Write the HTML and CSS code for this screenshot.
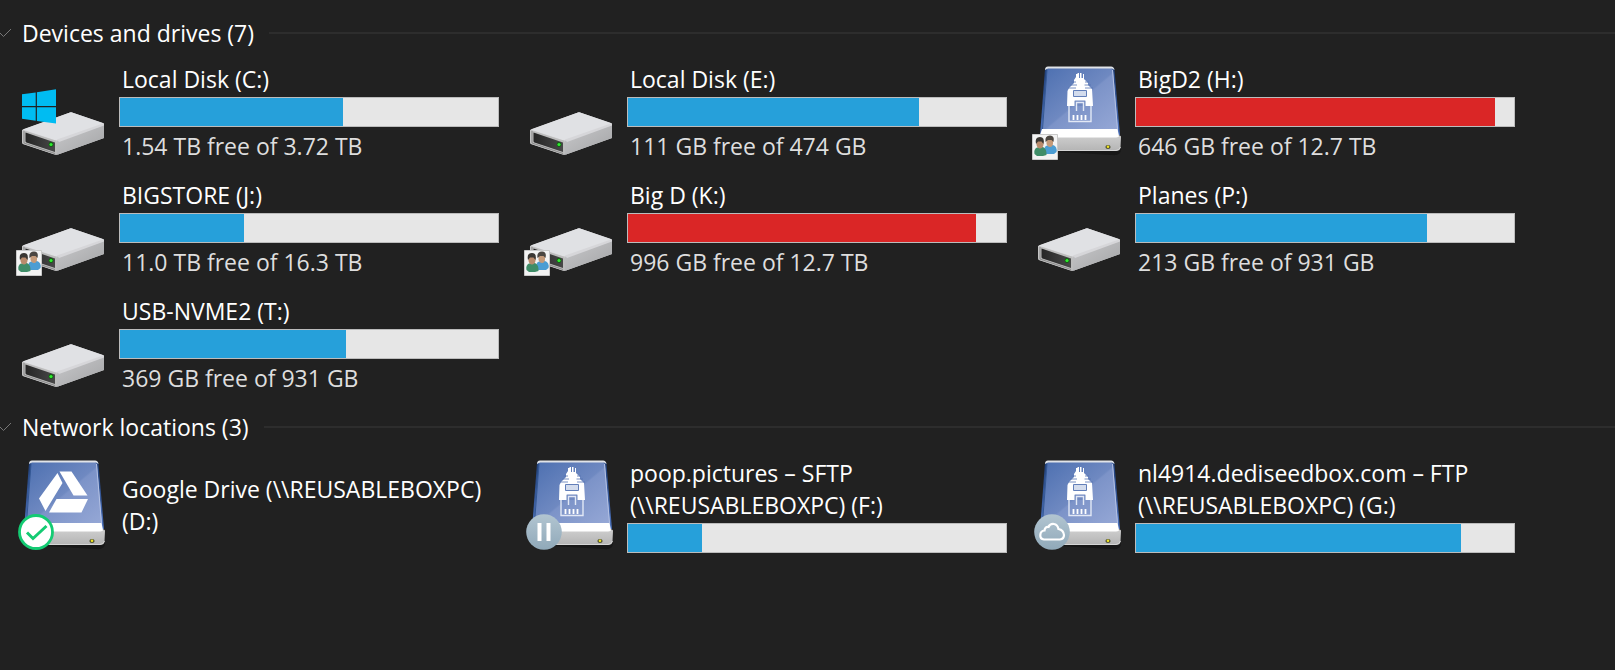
FILE: index.html
```html
<!DOCTYPE html>
<html lang="en">
<head>
<meta charset="utf-8">
<title>This PC</title>
<link rel="stylesheet" href="styles.css">
</head>
<body>
<svg class="defs" aria-hidden="true">
  <defs>
    <linearGradient id="side" x1="0" y1="0" x2="1" y2="1"><stop offset="0" stop-color="#c9c9cb"/><stop offset="1" stop-color="#a3a4a6"/></linearGradient>
    <linearGradient id="front" x1="0" y1="0" x2="1" y2="0"><stop offset="0" stop-color="#262626"/><stop offset="1" stop-color="#484848"/></linearGradient>
    <linearGradient id="blue" x1="0" y1="0" x2="1" y2="1"><stop offset="0" stop-color="#4c6fb0"/><stop offset=".5" stop-color="#6f89c1"/><stop offset=".52" stop-color="#7c93c8"/><stop offset="1" stop-color="#96a8d6"/></linearGradient>
    <linearGradient id="edge" x1="0" y1="0" x2="0" y2="1"><stop offset="0" stop-color="#1f3f78"/><stop offset="1" stop-color="#4d72bb"/></linearGradient>
    <linearGradient id="base" x1="0" y1="0" x2="0" y2="1"><stop offset="0" stop-color="#cfcfcf"/><stop offset="1" stop-color="#b4b4b4"/></linearGradient>
    <linearGradient id="disc" x1="0" y1="0" x2="0" y2="1"><stop offset="0" stop-color="#b2c5d1"/><stop offset="1" stop-color="#90a9b9"/></linearGradient>
    <symbol id="hdd" viewBox="0 0 96 96">
      <path d="M6 65 54 47.500Q55 47 56 47.500L87 58Q88 58.500 88 60V73L42 89.500Q40 90 38.500 89.500L7 79Q6 78.500 6 77Z" fill="#d0d0d2"/>
      <path d="M6.500 64.500 54 47.500Q55 47 56 47.500L88 58.500 80 63 43 74.500Q40 75.500 37 74.500Z" fill="#e0e1e4"/>
      <path d="M41 76 88 59.500V73L42 89.500Q40.500 89.500 40.500 88Z" fill="url(#side)"/>
      <path d="M41 74.500 84 59.500 88 58.500V60.500L43 77Z" fill="#d6d6d9"/>
      <path d="M6.500 65 39.500 75.500Q41 76 41 78V89.500L38 89.300 7 79Q6.300 78.500 6.300 77Z" fill="#bdbdbd"/>
      <path d="M9.500 67.500 39 77.500V87L10.500 77.500Q9.500 77 9.500 76Z" fill="url(#front)"/>
      <path d="M8 66V78L39 88.500" fill="none" stroke="#8b8b8b"/>
      <circle cx="35" cy="79.500" r="2.400" fill="#125d12"/><circle cx="35" cy="79.500" r="1.600" fill="#2fee2f"/>
    </symbol>
    <symbol id="winlogo" viewBox="0 0 96 96">
      <path d="M6 29.300 19.700 27.500V41H6ZM20.900 27.300 40 24.300V41H20.900ZM6 42.200H19.700V55.800L6 53.800ZM20.900 42.200H40V58.500L20.900 56Z" fill="#00bcf2"/>
    </symbol>
    <symbol id="netbox" viewBox="0 0 96 96">
      <path d="M9 86 80 90Q89 91 89 84V76Z" fill="#171717"/>
      <path d="M13 4Q13.500 2 16 2H79Q82 2 82.500 5L88 70H8Z" fill="url(#edge)"/>
      <path d="M15 5 15.500 2.500H79L81 5 86 66H10Z" fill="url(#blue)"/>
      <path d="M13 5Q13 1.500 16 1.500H79Q82 1.500 82.500 5L80 3.500H16Z" fill="#e1e4e8"/>
      <path d="M80.500 5 85.500 64" stroke="#b5c2e4"/>
      <path d="M15 5 10.500 64" stroke="#345894"/>
      <path d="M10 64H85.500L87.500 73H7Z" fill="#fff"/>
      <path d="M7 72.500H84Q87 72.500 87.500 70L89 71.500 88.500 83Q88 86 84 86H10Q7 86 7 83Z" fill="url(#base)"/>
      <path d="M8 85.500H84Q87.500 85 88.500 82" fill="none" stroke="#d6d6d6"/>
      <ellipse cx="76" cy="82" rx="2.600" ry="2" fill="#4f5130"/><circle cx="76" cy="81.800" r="1.300" fill="#f0e425"/>
    </symbol>
    <symbol id="plug" viewBox="0 0 96 96">
      <path d="M45.500 8H47V13H48V8H49.500V13H51V9H52V14L56 18V20L60 24 61 41H35L35.500 26 37 23 42 18V15L44 12V9H45.500Z" fill="#fff"/>
      <path d="M38 20H45M39.500 17H44M52.500 20H59M53 17H57M36 23H44M53 23H61" stroke="#5575b3" stroke-width=".8"/>
      <path d="M41.500 25.500H54.500V31.500H41.500Z" fill="#d3dced" stroke="#627fb9"/>
      <path d="M42.500 41V36Q42.500 35.500 43 35.500H53Q53.500 35.500 53.500 36V41Z" fill="#7089c0"/>
      <path d="M37 41V56.500H59V41M44.500 46V37.500H51.500V46" fill="none" stroke="#e2e8f5" stroke-width="1.400"/>
      <path d="M41.500 50V55M45.500 50V55M49.500 50V55M53.500 50V55" stroke="#fff" stroke-width="1.800"/>
    </symbol>
    <symbol id="gdrive" viewBox="0 0 96 96">
      <path d="M43.500 12.500H55.500L71.500 36.500H57.500ZM41.500 14 46.500 24 29.500 52 23 39.500ZM40.500 40H72L65.500 53.500H33Z" fill="#fff"/>
    </symbol>
    <symbol id="users" viewBox="0 0 26 26">
      <path d="M.5.5H25.500V25.500H.5Z" fill="#f3f3f3" stroke="#c9c9c9"/>
      <path d="M12 20Q11 13 15 11.500L21 11Q25.500 12.500 24.500 18L22 20Z" fill="#4b9dd3"/>
      <path d="M14.500 5H21V10Q20.500 13 18 13 15.500 13 14.500 10Z" fill="#c49a79"/>
      <path d="M13.500 8Q12.500 1.500 18 1.500 23 1.500 21.500 8L19.500 6H16Z" fill="#4b4641"/>
      <path d="M2.500 20Q1.500 15 5 13.500L11 13Q15 15 14.500 21L11 22H5Z" fill="#3f8d68"/>
      <path d="M4.500 7H11.500V11Q10.500 14.500 8 14.500 5.500 14.500 4.500 11Z" fill="#b98b6c"/>
      <path d="M4 10Q2.500 3 8 3 13 3 11.500 10L9.500 7.500H6Z" fill="#3a3733"/>
    </symbol>
    <symbol id="check" viewBox="0 0 36 36">
      <circle cx="18" cy="18" r="16.500" fill="#fff" stroke="#14cb73" stroke-width="2.800"/>
      <path d="M9 18.500 15 24.500 28.500 12" fill="none" stroke="#14cb73" stroke-width="3"/>
    </symbol>
    <symbol id="pause" viewBox="0 0 36 36">
      <circle cx="18" cy="18" r="17.800" fill="url(#disc)"/>
      <path d="M13.500 9V27M22.500 9V27" stroke="#fff" stroke-width="4"/>
    </symbol>
    <symbol id="cloud" viewBox="0 0 36 36">
      <circle cx="18" cy="18" r="17.800" fill="url(#disc)"/>
      <path d="M10 25.500Q6 25 6.300 21 6.500 17 10.500 16.500 11 12.500 14.500 13 16 9.500 20 10 23.500 10.500 24.500 15 29.500 16 30 21 30 25 26 25.500Z" fill="none" stroke="#fff" stroke-width="2.200"/>
    </symbol>
  </defs>
</svg>

<main class="view">
  <section class="group">
    <h2 class="group-title"><svg class="chevron" viewBox="0 0 12 10"><path d="M-1 4 3.500 8.500 11 1"/></svg><span>Devices and drives (7)</span></h2>
    <div class="items">
      <article class="item">
        <div class="icon"><svg viewBox="0 0 96 96"><use href="#hdd"/><use href="#winlogo"/></svg></div>
        <div class="info"><h3 class="name">Local Disk (C:)</h3><div class="bar"><div class="fill" style="width:59%"></div></div><p class="free">1.54 TB free of 3.72 TB</p></div>
      </article>
      <article class="item">
        <div class="icon"><svg viewBox="0 0 96 96"><use href="#hdd"/></svg></div>
        <div class="info"><h3 class="name">Local Disk (E:)</h3><div class="bar"><div class="fill" style="width:77%"></div></div><p class="free">111 GB free of 474 GB</p></div>
      </article>
      <article class="item">
        <div class="icon"><svg viewBox="0 0 96 96"><use href="#netbox"/><use href="#plug"/></svg><svg class="shared"><use href="#users"/></svg></div>
        <div class="info"><h3 class="name">BigD2 (H:)</h3><div class="bar"><div class="fill full" style="width:95%"></div></div><p class="free">646 GB free of 12.7 TB</p></div>
      </article>
      <article class="item">
        <div class="icon"><svg viewBox="0 0 96 96"><use href="#hdd"/></svg><svg class="shared"><use href="#users"/></svg></div>
        <div class="info"><h3 class="name">BIGSTORE (J:)</h3><div class="bar"><div class="fill" style="width:32.7%"></div></div><p class="free">11.0 TB free of 16.3 TB</p></div>
      </article>
      <article class="item">
        <div class="icon"><svg viewBox="0 0 96 96"><use href="#hdd"/></svg><svg class="shared"><use href="#users"/></svg></div>
        <div class="info"><h3 class="name">Big D (K:)</h3><div class="bar"><div class="fill full" style="width:92%"></div></div><p class="free">996 GB free of 12.7 TB</p></div>
      </article>
      <article class="item">
        <div class="icon"><svg viewBox="0 0 96 96"><use href="#hdd"/></svg></div>
        <div class="info"><h3 class="name">Planes (P:)</h3><div class="bar"><div class="fill" style="width:77%"></div></div><p class="free">213 GB free of 931 GB</p></div>
      </article>
      <article class="item">
        <div class="icon"><svg viewBox="0 0 96 96"><use href="#hdd"/></svg></div>
        <div class="info"><h3 class="name">USB-NVME2 (T:)</h3><div class="bar"><div class="fill" style="width:59.7%"></div></div><p class="free">369 GB free of 931 GB</p></div>
      </article>
    </div>
  </section>

  <section class="group">
    <h2 class="group-title"><svg class="chevron" viewBox="0 0 12 10"><path d="M-1 4 3.500 8.500 11 1"/></svg><span>Network locations (3)</span></h2>
    <div class="items">
      <article class="item">
        <div class="icon"><svg viewBox="0 0 96 96"><use href="#netbox"/><use href="#gdrive"/></svg><svg class="status"><use href="#check"/></svg></div>
        <div class="info"><h3 class="name">Google Drive (\\REUSABLEBOXPC) (D:)</h3></div>
      </article>
      <article class="item">
        <div class="icon"><svg viewBox="0 0 96 96"><use href="#netbox"/><use href="#plug"/></svg><svg class="status"><use href="#pause"/></svg></div>
        <div class="info"><h3 class="name">poop.pictures – SFTP (\\REUSABLEBOXPC) (F:)</h3><div class="bar"><div class="fill" style="width:19.6%"></div></div></div>
      </article>
      <article class="item">
        <div class="icon"><svg viewBox="0 0 96 96"><use href="#netbox"/><use href="#plug"/></svg><svg class="status"><use href="#cloud"/></svg></div>
        <div class="info"><h3 class="name">nl4914.dediseedbox.com – FTP (\\REUSABLEBOXPC) (G:)</h3><div class="bar"><div class="fill" style="width:86%"></div></div></div>
      </article>
    </div>
  </section>
</main>
</body>
</html>
```
FILE: styles.css
```css
* {
  box-sizing: border-box;
}

body {
  margin: 0;
  background: #212121;
  color: #fff;
  font: 23px/32px "Segoe UI", "Open Sans", "Noto Sans", sans-serif;
}

h2, h3, p {
  margin: 0;
  font-size: inherit;
  font-weight: 400;
}

.defs {
  position: absolute;
  width: 0;
  height: 0;
}

.view {
  padding-top: 17px;
}

.group {
  margin-bottom: 16px;
}

.group-title {
  display: flex;
  align-items: center;
  margin-bottom: 14px;
}

.group-title::after {
  content: "";
  flex: 1;
  height: 2px;
  margin-left: 15px;
  background: #2d2d2d;
}

.chevron {
  width: 12px;
  height: 10px;
  margin-right: 10px;
  fill: none;
  stroke: #777;
}

.items {
  display: grid;
  grid-template-columns: repeat(auto-fill, 483px);
  grid-auto-rows: minmax(100px, auto);
  gap: 16px 25px;
  padding-left: 16px;
}

.item {
  display: flex;
  align-items: flex-start;
  gap: 7px;
}

.icon {
  position: relative;
  flex: none;
  width: 96px;
  height: 96px;
  margin-top: 2px;
}

.icon svg {
  display: block;
  width: 100%;
  height: 100%;
}

.icon .shared {
  position: absolute;
  left: 0;
  bottom: 1px;
  width: 26px;
  height: 26px;
}

.icon .status {
  position: absolute;
  left: 2px;
  bottom: 5px;
  width: 36px;
  height: 36px;
}

.info {
  flex: 1;
  display: flex;
  flex-direction: column;
  justify-content: center;
  min-height: 96px;
}

.name, .free {
  padding-left: 3px;
}

.free {
  margin-top: 3px;
  color: #dedede;
}

.bar {
  height: 30px;
  margin-top: 2px;
  border: 1px solid #bcbcbc;
  background: #e6e6e6;
}

.fill {
  height: 100%;
  background: #26a0da;
}

.full {
  background: #da2626;
}
```
